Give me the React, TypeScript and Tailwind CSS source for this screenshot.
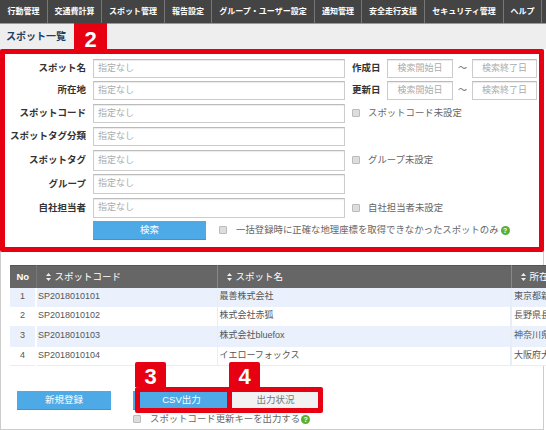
const FONT = "font-['Liberation_Sans','Noto_Sans_CJK_JP',sans-serif]";

const navItems = [
  { label: "行動管理", width: "w-[48px]" },
  { label: "交通費計算", width: "w-[54px]" },
  { label: "スポット管理", width: "w-[63px]" },
  { label: "報告設定", width: "w-[47px]" },
  { label: "グループ・ユーザー設定", width: "w-[103px]" },
  { label: "通知管理", width: "w-[47px]" },
  { label: "安全走行支援", width: "w-[63px]" },
  { label: "セキュリティ管理", width: "w-[79px]" },
  { label: "ヘルプ", width: "w-[38px]" },
];

const rows = [
  { no: 1, code: "SP2018010101", name: "最善株式会社", addr: "東京都新宿区", bg: "bg-[#eaf1fc]", height: "h-[19px]" },
  { no: 2, code: "SP2018010102", name: "株式会社赤狐", addr: "長野県長野市", bg: "bg-white", height: "h-[19px]" },
  { no: 3, code: "SP2018010103", name: "株式会社bluefox", addr: "神奈川県横浜市", bg: "bg-[#eaf1fc]", height: "h-[21px]" },
  { no: 4, code: "SP2018010104", name: "イエローフォックス", addr: "大阪府大阪市", bg: "bg-white", height: "h-[19px]" },
];

function TextInput({ placeholder = "指定なし", className = "" }: { placeholder?: string; className?: string }) {
  return (
    <div className={`flex items-center border border-[#ccc] border-t-[#bbb] shadow-[inset_0_1px_1px_rgba(0,0,0,0.08)] bg-white text-[9px] text-[#aaa] ${className}`}>
      {placeholder}
    </div>
  );
}

function Check() {
  return <span className="inline-block w-[8px] h-[8px] shrink-0 rounded-[1px] border border-[#bbb] bg-[#ddd]" />;
}

function CheckLabel({ label, className = "" }: { label: string; className?: string }) {
  return (
    <div className={`flex items-center gap-[8px] ${className}`}>
      <Check />
      <span className="text-[9.4px] text-[#666] whitespace-nowrap">{label}</span>
    </div>
  );
}

function HelpDot() {
  return (
    <span className="flex items-center justify-center shrink-0 w-[9px] h-[9px] rounded-full bg-[#5ab031] text-[7px] font-bold text-white leading-none">?</span>
  );
}

function Sort() {
  return (
    <svg width="5" height="8" viewBox="0 0 5 8" className="shrink-0">
      <path d="M2.5 0 L5 3 H0 Z M2.5 8 L0 5 H5 Z" fill="#eee" />
    </svg>
  );
}

function FormRow({ label, height, children }: { label: string; height: string; children?: React.ReactNode }) {
  return (
    <div className={`flex items-center ${height}`}>
      <div className="w-[85px] text-right text-[9.5px] font-bold text-[#333] whitespace-nowrap">{label}</div>
      <TextInput className="ml-[7px] w-[252px] h-full pl-[4px]" />
      {children}
    </div>
  );
}

function DateRange({ label }: { label: string }) {
  return (
    <>
      <div className="ml-[7px] w-[35px] text-[9.5px] font-bold text-[#333] whitespace-nowrap">{label}</div>
      <TextInput placeholder="検索開始日" className="w-[66px] h-full justify-center" />
      <span className="w-[19px] text-center text-[9px] text-[#666]">〜</span>
      <TextInput placeholder="検索終了日" className="w-[65px] h-full justify-center" />
    </>
  );
}

function Badge({ value, className }: { value: string; className: string }) {
  return (
    <div className={`absolute flex items-end justify-center bg-[#e60012] text-[22px] leading-[18px] font-bold text-white ${className}`}>
      {value}
    </div>
  );
}

export default function App() {
  return (
    <div className={`${FONT} relative w-[546px] h-[430px] overflow-hidden bg-white`}>
      <nav className="flex h-[24px] bg-[#444] border-b border-[#999]">
        {navItems.map((item) => (
          <div key={item.label} className={`${item.width} flex items-center justify-center border-r border-[#777] text-[8px] font-bold text-white whitespace-nowrap`}>
            {item.label}
          </div>
        ))}
      </nav>

      <div className="h-[25px] bg-[#eee] pl-[6px] flex items-center text-[10px] font-bold text-[#1d3f63]">スポット一覧</div>

      <div className="h-[381px] w-[544px] border-l border-r border-b border-[#ccc]">
        <section className="pt-[10px] flex flex-col">
          <FormRow label="スポット名" height="h-[19px]"><DateRange label="作成日" /></FormRow>
          <div className="h-[3px]" />
          <FormRow label="所在地" height="h-[19px]"><DateRange label="更新日" /></FormRow>
          <div className="h-[4px]" />
          <FormRow label="スポットコード" height="h-[19px]"><CheckLabel label="スポットコード未設定" className="ml-[7px]" /></FormRow>
          <div className="h-[4px]" />
          <FormRow label="スポットタグ分類" height="h-[19px]" />
          <div className="h-[4px]" />
          <FormRow label="スポットタグ" height="h-[21px]"><CheckLabel label="グループ未設定" className="ml-[7px]" /></FormRow>
          <div className="h-[3px]" />
          <FormRow label="グループ" height="h-[20px]" />
          <div className="h-[4px]" />
          <FormRow label="自社担当者" height="h-[20px]"><CheckLabel label="自社担当者未設定" className="ml-[7px]" /></FormRow>
          <div className="flex items-center mt-[3px] ml-[92px] h-[19px]">
            <button className="w-[113px] h-full bg-[#4eaae6] border-b border-[#3d94cf] text-[9.5px] text-white">検索</button>
            <div className="ml-[13px] flex items-center">
              <Check />
              <span className="ml-[9px] text-[9.4px] text-[#666] whitespace-nowrap">一括登録時に正確な地理座標を取得できなかったスポットのみ</span>
              <span className="ml-[2px]"><HelpDot /></span>
            </div>
          </div>
        </section>

        <table className="mt-[25px] ml-[9px] w-[536px] table-fixed border-collapse text-[9px] text-[#555]">
          <colgroup>
            <col className="w-[26px]" />
            <col className="w-[181px]" />
            <col className="w-[294px]" />
            <col />
          </colgroup>
          <thead>
            <tr className="h-[22px] bg-[#666] border-t border-[#555] text-white text-[9.5px]">
              <th className="text-center font-bold border-r border-[#777]">No</th>
              <th className="pl-[9px] font-normal border-r border-[#888]">
                <div className="flex items-center gap-[4px]"><Sort />スポットコード</div>
              </th>
              <th className="pl-[9px] font-normal border-r border-[#888]">
                <div className="flex items-center gap-[4px]"><Sort />スポット名</div>
              </th>
              <th className="pl-[9px] font-normal">
                <div className="flex items-center gap-[4px]"><Sort /><span className="whitespace-nowrap">所在地</span></div>
              </th>
            </tr>
          </thead>
          <tbody className="border-b border-[#e8eef8]">
            {rows.map((row) => (
              <tr key={row.no} className={`${row.height} ${row.bg}`}>
                <td className="text-center border-r-2 border-white">{row.no}</td>
                <td className="pl-[1px] border-r border-[#e8eef8]">{row.code}</td>
                <td className="pl-[2px] border-r-2 border-[#e8eef8]">{row.name}</td>
                <td className="pl-[2px] whitespace-nowrap overflow-hidden">{row.addr}</td>
              </tr>
            ))}
          </tbody>
        </table>

        <div className="flex items-start mt-[25px] ml-[16px]">
          <button className="w-[94px] h-[19px] bg-[#4eaae6] border-b border-[#3d94cf] text-[9.5px] text-white">新規登録</button>
          <div className="ml-[22px]">
            <div className="flex">
              <button className="w-[97px] h-[19px] bg-[#4eaae6] border-b border-[#3d94cf] text-[9.5px] text-white">CSV出力</button>
              <button className="ml-[2px] w-[87px] h-[19px] bg-[#f2f2f2] text-[9.5px] text-[#777]">出力状況</button>
            </div>
            <div className="flex items-center mt-[2px]">
              <Check />
              <span className="ml-[9px] text-[9.4px] text-[#666] whitespace-nowrap">スポットコード更新キーを出力する</span>
              <span className="ml-[1px]"><HelpDot /></span>
            </div>
          </div>
        </div>
      </div>

      {/* red annotations */}
      <div className="absolute left-0 top-[49px] w-[544px] h-[203px] border-[5px] border-[#e60012] rounded-[2px]" />
      <Badge value="2" className="left-[74px] top-[23px] w-[33px] h-[26px]" />

      <Badge value="3" className="left-[135px] top-[362px] w-[31px] h-[25px] pb-[1px] rounded-t-[2px]" />
      <div className="absolute left-[135px] top-[387px] w-[97px] h-[26px] border-[5px] border-[#e60012] rounded-[2px]" />
      <Badge value="4" className="left-[229px] top-[362px] w-[31px] h-[25px] pb-[1px] rounded-t-[2px]" />
      <div className="absolute left-[227px] top-[387px] w-[96px] h-[26px] border-[5px] border-[#e60012] rounded-[2px]" />
    </div>
  );
}
